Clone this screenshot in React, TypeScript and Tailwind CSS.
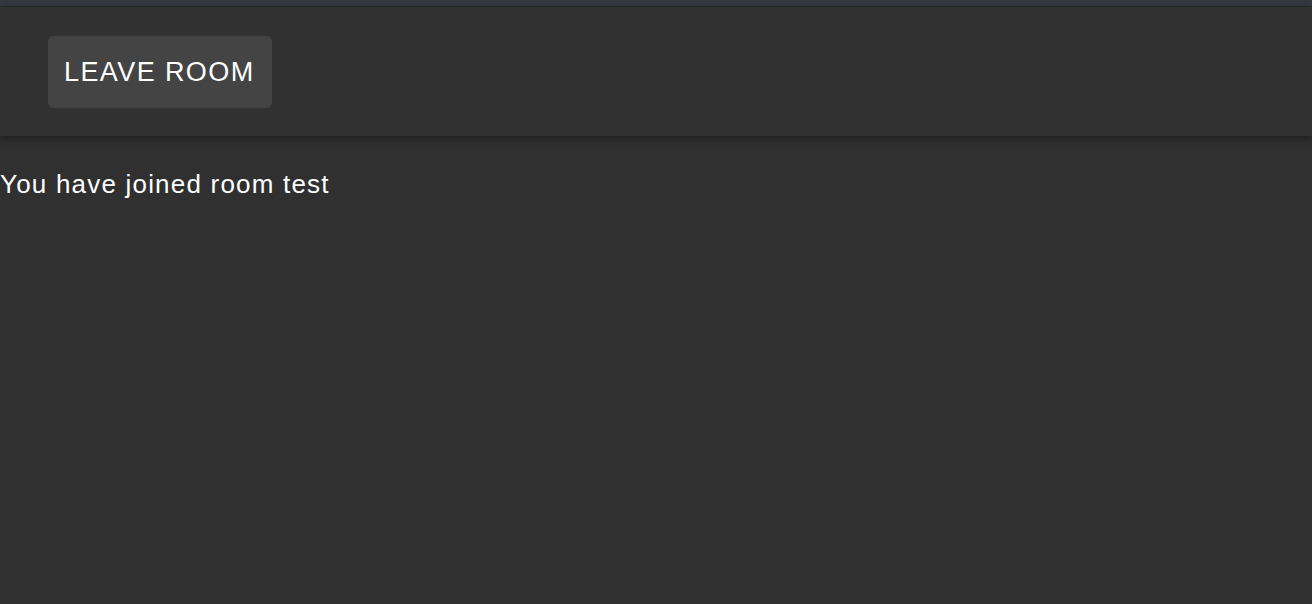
export default function App() {
  return (
    <div className="min-h-[604px] bg-[#303030] text-white font-['Liberation_Sans',Arial,sans-serif]">
      <div className="h-[7px] bg-[#343a40] border-b border-[#2a2e33]" />
      <header className="h-[129px] bg-[#313131] shadow-[0_2px_8px_rgba(0,0,0,0.45)] px-12 pt-[29px] relative z-10">
        <button className="h-[72px] w-[224px] pl-4 text-left rounded-[6px] bg-[#444444] text-[27px] tracking-[1.4px] text-white">
          LEAVE ROOM
        </button>
      </header>
      <p className="mt-[32px] text-[26px] leading-[32px] tracking-[1.2px]">You have joined room test</p>
    </div>
  );
}
